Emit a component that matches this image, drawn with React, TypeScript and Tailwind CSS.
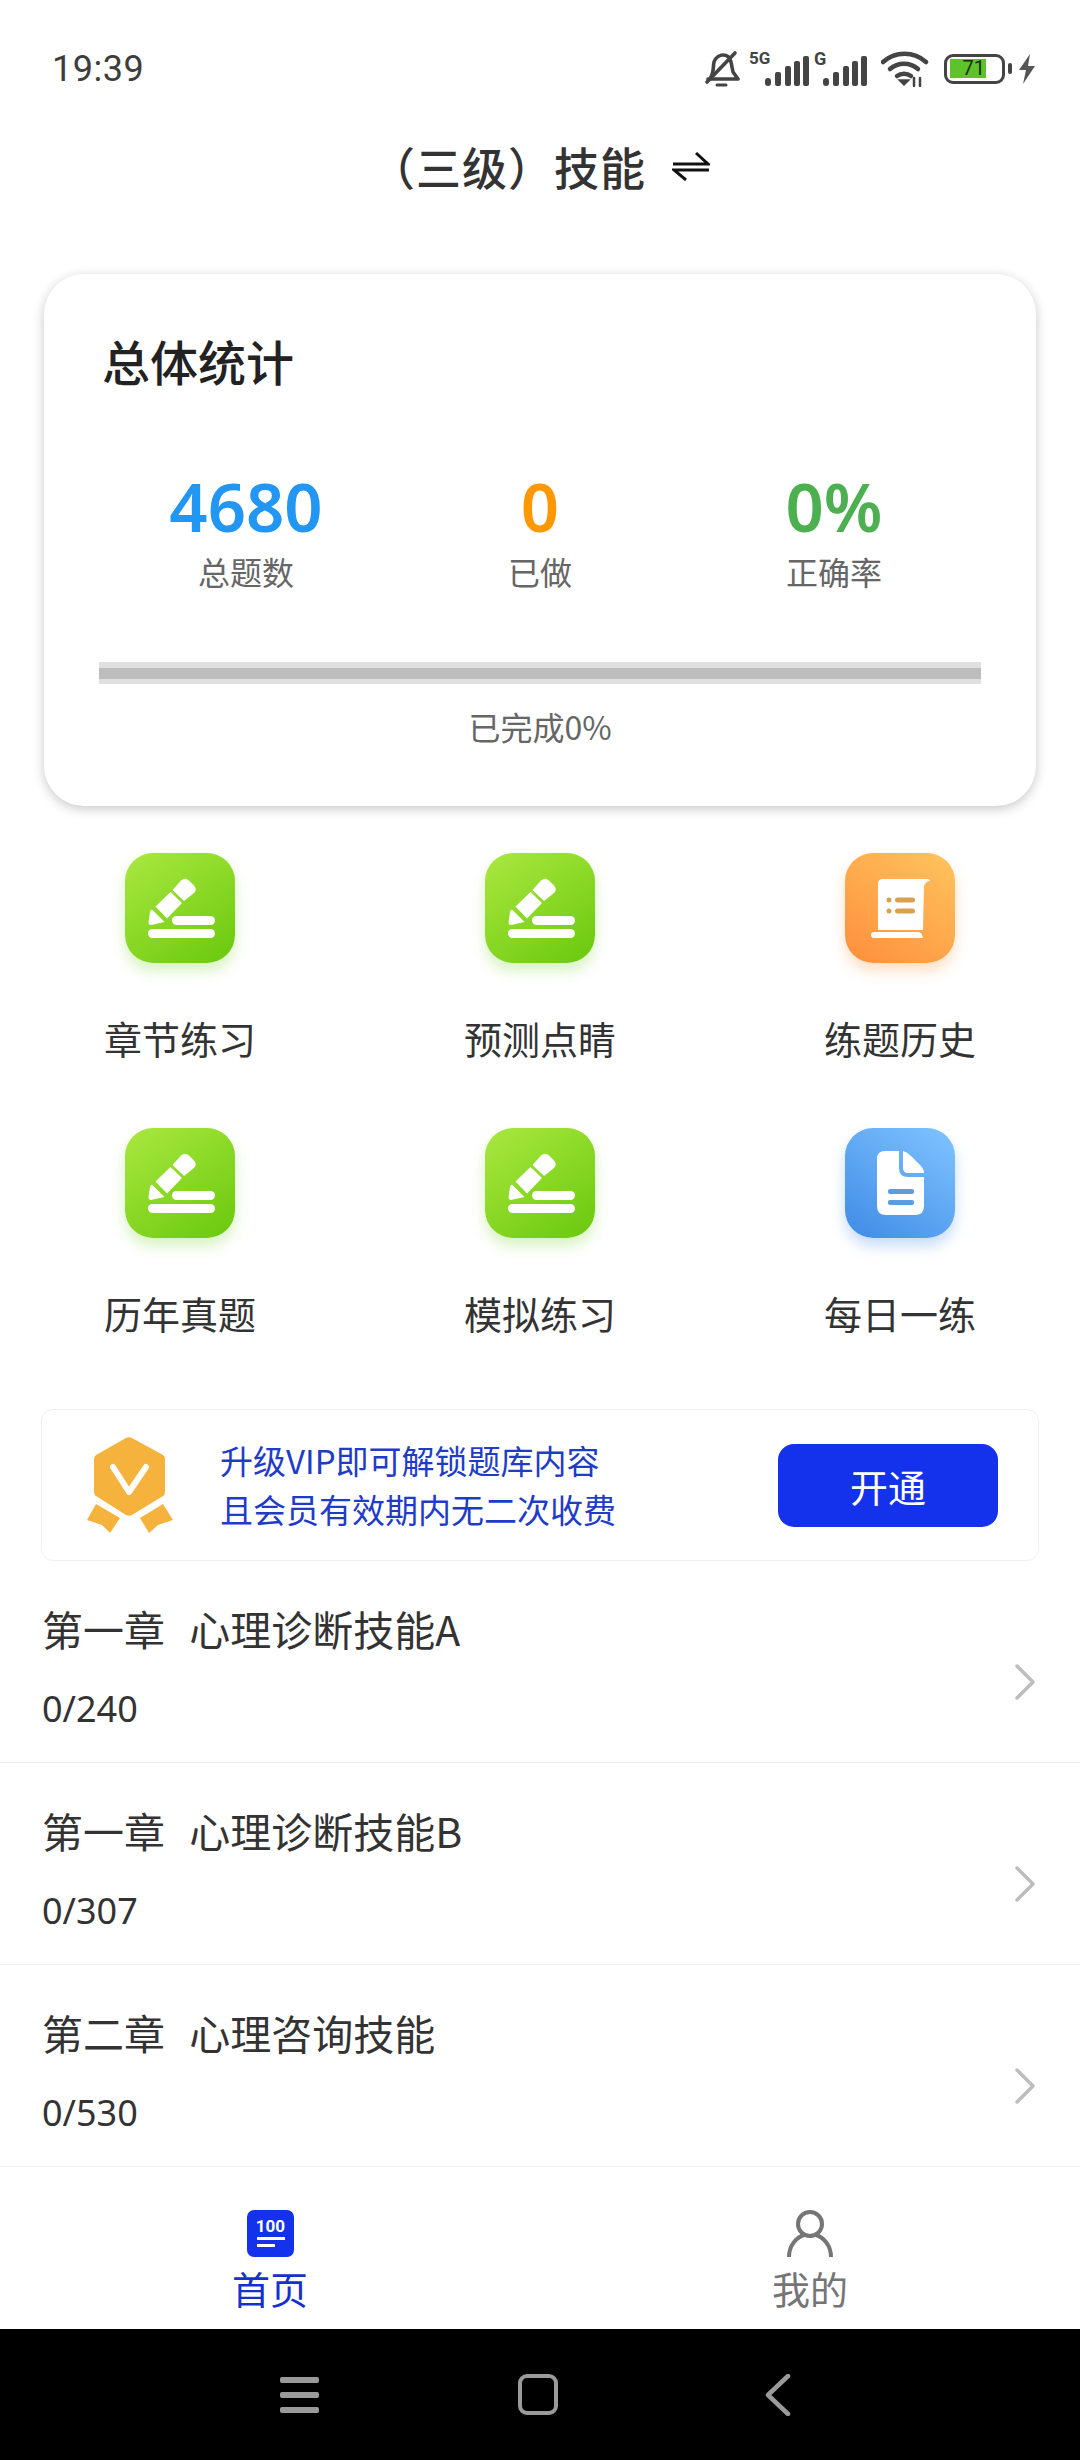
import React from "react";

const cjk = "font-['Noto_Sans_CJK_SC','Noto_Sans',sans-serif]";

function Signal() {
  return (
    <svg width="44" height="30" viewBox="0 0 44 30" fill="#444">
      <rect x="0" y="22" width="6" height="8" rx="3" />
      <rect x="10" y="16" width="6" height="14" rx="2" />
      <rect x="20" y="10" width="6" height="20" rx="2" />
      <rect x="29" y="5" width="6" height="25" rx="2" />
      <rect x="38" y="0" width="6" height="30" rx="2" />
    </svg>
  );
}

function StatusBar() {
  return (
    <div className="h-[131px] flex items-center justify-between pl-[52px] pr-[44px] pt-[6px] shrink-0">
      <span className="text-[36px] leading-none text-[#3d3d3d] font-['Roboto'] tracking-[0.5px]">19:39</span>
      <div className="flex items-center">
        <svg width="36" height="38" viewBox="0 0 36 38" fill="none" stroke="#444" strokeWidth="3.6" strokeLinecap="round" strokeLinejoin="round">
          <path d="M7 27 C10 22 9 16 10 12 C11.500 7 16 5 19 5 C23 5 26 8 27 12 L29 22 L34 29 L4 29" />
          <path d="M3 32 L31 3" />
          <path d="M13 35 L22 35" strokeWidth="3" />
        </svg>
        <div className="relative w-[60px] h-[34px] ml-[9px]">
          <span className="absolute left-0 top-[-2px] text-[17px] leading-none font-bold text-[#444] font-['Roboto']">5G</span>
          <div className="absolute left-[16px] top-[4px]"><Signal /></div>
        </div>
        <div className="relative w-[58px] h-[34px]">
          <span className="absolute left-[5px] top-[-2px] text-[18px] leading-none font-bold text-[#444] font-['Roboto']">G</span>
          <div className="absolute left-[14px] top-[4px]"><Signal /></div>
        </div>
        <svg className="ml-[14px]" width="48" height="36" viewBox="0 0 48 36" fill="none" stroke="#444" strokeWidth="4.500" strokeLinecap="round">
          <path d="M2 11 C14 0 33 0 45 11" />
          <path d="M9 18 C17 11 29 11 37 18" />
          <path d="M16 25 C20 22 26 22 30 25" />
          <path d="M18 29 L23 34 L28 29 Z" fill="#444" strokeWidth="1.500" />
          <path d="M33 27 L33 35 M39 27 L39 35" strokeWidth="2.500" />
        </svg>
        <div className="ml-[15px] w-[61px] h-[30px] border-[3.5px] border-[#444] rounded-[9px] flex items-center px-[3px]">
          <div className="w-[36px] h-[19px] bg-[#5fc22a] relative">
            <span className="absolute right-[1px] top-0 text-[20px] leading-[19px] text-[#173005] font-['Roboto']">71</span>
          </div>
        </div>
        <div className="w-[4px] h-[11px] rounded-[2px] bg-[#444] ml-[3px]" />
        <svg className="ml-[6px]" width="18" height="30" viewBox="0 0 18 30" fill="#555">
          <path d="M12 0 L1 16 L8 16 L5 30 L17 12 L10 12 Z" />
        </svg>
      </div>
    </div>
  );
}

function Header() {
  return (
    <div className="h-[70px] flex items-center justify-center shrink-0">
      <span className={`text-[45px] leading-none font-medium text-[#333] ${cjk} tracking-[1px]`}>（三级）技能</span>
      <svg className="ml-[26px]" width="38" height="30" viewBox="0 0 38 30" fill="none" stroke="#111" strokeWidth="3">
        <path d="M1 13 L36 13 L24 2" />
        <path d="M37 19 L2 19 L14 29" />
      </svg>
    </div>
  );
}

function Stat({ value, label, color }: { value: string; label: string; color: string }) {
  return (
    <div className="w-[296px] flex flex-col items-center">
      <span className={`text-[67px] leading-[76px] font-semibold ${color} font-['Noto_Sans']`}>{value}</span>
      <span className={`mt-[5px] text-[32px] leading-[44px] text-[#666] ${cjk}`}>{label}</span>
    </div>
  );
}

function StatsCard() {
  return (
    <div className="mt-[73px] mx-[44px] h-[532px] rounded-[40px] bg-white shadow-[0_3px_12px_rgba(0,0,0,0.22)] px-[55px] pt-[54px] shrink-0">
      <div className={`text-[48px] leading-[64px] font-medium text-[#222] ${cjk} ml-[3px]`}>总体统计</div>
      <div className="mt-[76px] flex justify-center">
        <Stat value="4680" label="总题数" color="text-[#2196f3]" />
        <Stat value="0" label="已做" color="text-[#ff9800]" />
        <Stat value="0%" label="正确率" color="text-[#4caf50]" />
      </div>
      <div className="mt-[69px] h-[22px] bg-[#e0e0e0] flex items-center">
        <div className="w-full h-[11px] bg-[#bdbdbd]" />
      </div>
      <div className={`mt-[20px] text-center text-[32px] leading-[44px] text-[#666] ${cjk}`}>已完成0%</div>
    </div>
  );
}

function PencilIcon() {
  return (
    <svg width="110" height="110" viewBox="0 0 110 110" fill="#fff">
      <path d="M56 27.500 Q60 24 64 27.500 L69 32.500 Q72.500 36.500 69 40 L59 48 L47.500 37 Z" />
      <path d="M45.500 39 L57 50 L42 65.500 L30.500 53.500 Z" />
      <path d="M27.500 57 L39.500 69 L26 72 Q23.500 72 23.500 69 L25 59 Q26 56 27.500 57 Z" />
      <rect x="47" y="63" width="43" height="9" rx="4.500" />
      <rect x="23" y="76" width="67" height="9" rx="4.500" />
    </svg>
  );
}

function ScrollIcon() {
  return (
    <svg width="110" height="110" viewBox="0 0 110 110">
      <path d="M38 26 L82 26 Q85 26 85 28 Q81 28 79 33 L78 77 L33 77 L33 31 Q33 26 38 26 Z" fill="#fff" />
      <path d="M29 79 L73 79 Q77 79 78 85 L29 85 Q26 85 26 82 Q26 79 29 79 Z" fill="#fff" />
      <circle cx="44" cy="47" r="2.500" fill="#d9a050" />
      <circle cx="44" cy="58" r="2.500" fill="#d9a050" />
      <rect x="50" y="44.500" width="20" height="5" rx="2.500" fill="#d9a050" />
      <rect x="50" y="55.500" width="20" height="5" rx="2.500" fill="#d9a050" />
    </svg>
  );
}

function DocIcon() {
  return (
    <svg width="110" height="110" viewBox="0 0 110 110">
      <path d="M40 23 L54 23 L54 40 Q54 49 63 49 L79 49 L79 78 Q79 87 70 87 L41 87 Q32 87 32 78 L32 31 Q32 23 40 23 Z" fill="#fff" />
      <path d="M58 23 Q62 24 66 28 L75 37 Q79 41 79 45 L63 45 Q58 45 58 40 Z" fill="#fff" />
      <rect x="43" y="61" width="26" height="5" rx="2" fill="#5a9de0" />
      <rect x="43" y="72" width="26" height="5" rx="2" fill="#5a9de0" />
    </svg>
  );
}

function GridItem({ kind, label }: { kind: "g" | "o" | "b"; label: string }) {
  const box =
    kind === "g"
      ? "bg-[linear-gradient(145deg,#abe840,#69c80c)] shadow-[0_8px_14px_rgba(125,215,50,0.3)]"
      : kind === "o"
        ? "bg-[linear-gradient(215deg,#ffc45e,#ff8e3c)] shadow-[0_8px_14px_rgba(255,150,60,0.3)]"
        : "bg-[linear-gradient(215deg,#80c4ff,#3f8be6)] shadow-[0_8px_14px_rgba(70,140,230,0.3)]";
  return (
    <div className="w-[360px] h-[275px] flex flex-col items-center">
      <div className={`w-[110px] h-[110px] rounded-[28px] ${box}`}>
        {kind === "g" ? <PencilIcon /> : kind === "o" ? <ScrollIcon /> : <DocIcon />}
      </div>
      <div className={`mt-[48px] text-[38px] leading-[54px] text-[#333] ${cjk}`}>{label}</div>
    </div>
  );
}

function Grid() {
  return (
    <div className="mt-[47px] grid grid-cols-3 grid-rows-[275px_275px] shrink-0 h-[550px]">
      <GridItem kind="g" label="章节练习" />
      <GridItem kind="g" label="预测点睛" />
      <GridItem kind="o" label="练题历史" />
      <GridItem kind="g" label="历年真题" />
      <GridItem kind="g" label="模拟练习" />
      <GridItem kind="b" label="每日一练" />
    </div>
  );
}

function Badge() {
  return (
    <svg width="100" height="110" viewBox="0 0 100 110" fill="#f5b33e">
      <path d="M46 8 Q49 6.500 52 8 L83 25 Q85 26.500 85 29 L85 62 Q85 65 83 66 L52 85 Q49 86.500 46 85 L16 66 Q14 65 14 62 L14 29 Q14 26.500 16 25 Z" />
      <path d="M33 37 L49 62 L66 37" fill="none" stroke="#fff" strokeWidth="6" strokeLinecap="round" strokeLinejoin="round" />
      <path d="M16 74 L40 88 L30 103 L22 95 L7 90 Z" />
      <path d="M83 74 L60 88 L69 103 L78 95 L93 90 Z" />
    </svg>
  );
}

function VipBanner() {
  return (
    <div className="mt-[6px] mx-[41px] h-[152px] rounded-[12px] border border-[#f0f0f0] shrink-0 flex items-center pl-[38px] pr-[40px]">
      <Badge />
      <div className={`ml-[40px] flex-1 text-[33px] leading-[49px] text-[#1e3cc8] ${cjk}`}>
        <div>升级VIP即可解锁题库内容</div>
        <div>且会员有效期内无二次收费</div>
      </div>
      <div className={`w-[220px] h-[83px] rounded-[16px] bg-[#1431ec] flex items-center justify-center text-[38px] text-white ${cjk}`}>开通</div>
    </div>
  );
}

function ChapterRow({ title, count }: { title: string; count: string }) {
  return (
    <div className="h-[202px] shrink-0 border-b border-[#f0f0f0] flex items-center justify-between pl-[42px] pr-[44px]">
      <div className="pt-[10px]">
        <div className={`text-[41px] leading-[56px] text-[#333] whitespace-pre [word-spacing:3px] ${cjk}`}>{title}</div>
        <div className="mt-[28px] text-[36px] leading-[50px] text-[#333] font-['Noto_Sans']">{count}</div>
      </div>
      <svg className="mt-[40px]" width="22" height="38" viewBox="0 0 22 38" fill="none" stroke="#bdbdbd" strokeWidth="3.500" strokeLinecap="round" strokeLinejoin="round">
        <path d="M3 3 L19 19 L3 35" />
      </svg>
    </div>
  );
}

function TabBar() {
  return (
    <div className="h-[162px] shrink-0 flex pt-[43px]">
      <div className="w-[540px] flex flex-col items-center">
        <svg width="47" height="47" viewBox="0 0 47 47">
          <rect width="47" height="47" rx="7" fill="#1431ec" />
          <text x="23.500" y="22" textAnchor="middle" fill="#fff" fontSize="17" fontWeight="700" fontFamily="Roboto">100</text>
          <rect x="10" y="27" width="28" height="3" fill="#fff" />
          <rect x="10" y="34" width="18" height="3" fill="#fff" />
        </svg>
        <span className={`mt-[6px] text-[38px] leading-[50px] text-[#1431d0] ${cjk}`}>首页</span>
      </div>
      <div className="w-[540px] flex flex-col items-center">
        <svg width="46" height="47" viewBox="0 0 46 47" fill="none" stroke="#757575" strokeWidth="4">
          <ellipse cx="23" cy="14" rx="12" ry="12" />
          <path d="M2 47 C2 35 10 27 17 25 M44 47 C44 35 36 27 29 25" />
        </svg>
        <span className={`mt-[6px] text-[38px] leading-[50px] text-[#757575] ${cjk}`}>我的</span>
      </div>
    </div>
  );
}

function NavBar() {
  return (
    <div className="flex-1 bg-black flex items-center justify-center pr-[10px]">
      <div className="flex flex-col gap-[9px] w-[39px] mr-[199px]">
        <div className="h-[6px] rounded-[2px] bg-[#9a9a9a]" />
        <div className="h-[6px] rounded-[2px] bg-[#9a9a9a]" />
        <div className="h-[6px] rounded-[2px] bg-[#9a9a9a]" />
      </div>
      <div className="w-[40px] h-[41px] rounded-[9px] border-[4px] border-[#9a9a9a] mr-[207px]" />
      <svg width="26" height="42" viewBox="0 0 26 42" fill="none" stroke="#9a9a9a" strokeWidth="4.500" strokeLinecap="round" strokeLinejoin="round">
        <path d="M23 2 L3 21 L23 40" />
      </svg>
    </div>
  );
}

export default function App() {
  return (
    <div className="w-[1080px] h-[2460px] bg-white flex flex-col overflow-hidden">
      <StatusBar />
      <Header />
      <StatsCard />
      <Grid />
      <VipBanner />
      <ChapterRow title="第一章  心理诊断技能A" count="0/240" />
      <ChapterRow title="第一章  心理诊断技能B" count="0/307" />
      <ChapterRow title="第二章  心理咨询技能" count="0/530" />
      <TabBar />
      <NavBar />
    </div>
  );
}
